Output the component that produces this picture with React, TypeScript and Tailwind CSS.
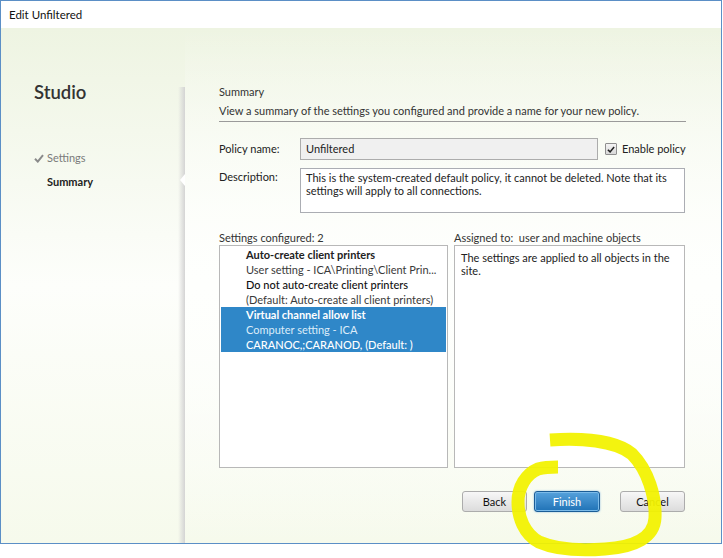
import React from "react"

const font = { fontFamily: "Lato, 'Open Sans', sans-serif" }

function CheckIcon({ className }: { className?: string }) {
    return (
        <svg viewBox="0 0 10 9" className={className}>
            <path d="M1 4.8 L3.8 7.6 L9 1.2" fill="none" stroke="currentColor" strokeWidth="2" />
        </svg>
    )
}

function Button({ label, primary }: { label: string; primary?: boolean }) {
    if (primary) {
        return (
            <button className="w-[66px] h-[21px] rounded-[3px] border border-[#1b5d97] bg-gradient-to-b from-[#55a2dc] to-[#1f72b6] text-white text-[11px] leading-none shadow-[inset_0_0_0_1px_#7cbbe9,0_0_2px_#7fb3de]">
                {label}
            </button>
        )
    }
    return (
        <button className="w-[65px] h-[21px] rounded-[3px] border border-[#acacac] bg-gradient-to-b from-[#f7f7f7] to-[#dcdcdc] text-[#111] text-[11px] leading-none">
            {label}
        </button>
    )
}

export default function App() {
    return (
        <div className="relative w-[723px] h-[558px] bg-white overflow-hidden text-[11px] text-[#222]" style={font}>
            <div className="w-[722px] h-[544px] border border-[#5b8fc6] flex flex-col">
                <div className="h-[27px] bg-white flex items-center pl-[8px] text-[11.5px] text-[#111]">
                    Edit Unfiltered
                </div>

                <div className="flex-1 flex bg-gradient-to-b from-[#eef4e2] via-[#fdfefb] to-[#f6faec]">
                    {/* wizard steps */}
                    <div className="w-[177px] pl-[33px] pt-[53px]">
                        <div className="text-[18.5px] leading-[22px] font-semibold text-[#333]">Studio</div>
                        <div className="mt-[48px] flex items-center h-[15px] text-[#7a7a7a]">
                            <CheckIcon className="w-[10px] h-[9px] text-[#8a8a8a]" />
                            <span className="ml-[3px]">Settings</span>
                        </div>
                        <div className="mt-[8px] pl-[13px] h-[15px] leading-[15px] font-bold text-[#222]">Summary</div>
                    </div>

                    <div className="relative w-[7px] mt-[59px] bg-gradient-to-r from-transparent to-[#d4d4d4]">
                        <div className="absolute right-0 top-[87px] w-0 h-0 border-y-[6px] border-y-transparent border-r-[5px] border-r-white" />
                    </div>

                    {/* summary page */}
                    <div className="flex-1 pl-[34px] pr-[35px] pt-[56px] bg-gradient-to-b from-transparent via-[#fefffd] to-transparent">
                        <div className="h-[15px] leading-[15px] text-[#333]">Summary</div>
                        <div className="mt-[4px] h-[15px] leading-[15px] text-[#333]">
                            View a summary of the settings you configured and provide a name for your new policy.
                        </div>
                        <div className="mt-[3px] border-t border-[#9a9a9a]" />

                        <div className="mt-[16px] flex items-center h-[22px]">
                            <div className="w-[81px]">Policy name:</div>
                            <div className="w-[298px] h-[22px] border border-[#acacac] bg-[#f0f0f0] pl-[5px] flex items-center">
                                Unfiltered
                            </div>
                            <div className="ml-[7px] w-[12px] h-[12px] border border-[#8f8f8f] rounded-[1px] bg-gradient-to-b from-[#f4f4f4] to-[#d9d9d9] flex items-center justify-center">
                                <CheckIcon className="w-[8px] h-[7px] text-[#222]" />
                            </div>
                            <div className="ml-[5px]">Enable policy</div>
                        </div>

                        <div className="mt-[8px] flex">
                            <div className="w-[81px] pt-[1px] leading-[15px]">Description:</div>
                            <div className="w-[385px] h-[45px] border border-[#abadb3] bg-white pl-[5px] pt-[2px] leading-[13px]">
                                This is the system-created default policy, it cannot be deleted. Note that its
                                <br />
                                settings will apply to all connections.
                            </div>
                        </div>

                        <div className="mt-[17px] flex gap-[6px]">
                            <div className="w-[229px]">
                                <div className="h-[15px] leading-[15px] text-[#333]">Settings configured: 2</div>
                                <div className="h-[223px] border border-[#b8b8b8] bg-white pt-[1px] px-[1px]">
                                    <div className="pl-[25px] leading-[15px]">
                                        <div className="font-bold h-[15px]">Auto-create client printers</div>
                                        <div className="h-[15px] text-[#3a3a3a]">User setting - ICA\Printing\Client Prin...</div>
                                        <div className="font-medium h-[15px] text-[#111]">Do not auto-create client printers</div>
                                        <div className="h-[15px] text-[#3a3a3a]">(Default: Auto-create all client printers)</div>
                                    </div>
                                    <div className="bg-[#2f87c8] text-white pl-[25px] leading-[15px]">
                                        <div className="font-bold h-[15px]">Virtual channel allow list</div>
                                        <div className="h-[15px] text-[#dcecf9]">Computer setting - ICA</div>
                                        <div className="font-medium h-[15px]">CARANOC,;CARANOD, (Default: )</div>
                                    </div>
                                </div>
                            </div>
                            <div className="w-[231px]">
                                <div className="h-[15px] leading-[15px] text-[#333]">
                                    Assigned to:&nbsp; user and machine objects
                                </div>
                                <div className="h-[223px] border border-[#b8b8b8] bg-white pl-[6px] pt-[5px] leading-[13px]">
                                    The settings are applied to all objects in the
                                    <br />
                                    site.
                                </div>
                            </div>
                        </div>

                        <div className="mt-[23px] flex justify-end pr-[1px]">
                            <Button label="Back" />
                            <div className="ml-[7px]">
                                <Button label="Finish" primary />
                            </div>
                            <div className="ml-[20px]">
                                <Button label="Cancel" />
                            </div>
                        </div>
                    </div>
                </div>
            </div>

            {/* hand drawn highlight */}
            <svg className="absolute inset-0 pointer-events-none" width="723" height="558" viewBox="0 0 723 558">
                <path
                    d="M550 440 C580 438 615 440 632 454 C648 470 656 497 655 518 C654 537 635 547 605 549 C580 551 555 549 539 542 C524 534 518 517 518 502 C518 487 526 474 538 469 C545 467 552 467 558 467"
                    fill="none"
                    stroke="#f2f200"
                    strokeOpacity="0.94"
                    strokeWidth="13"
                    strokeLinejoin="round"
                />
            </svg>
        </div>
    )
}
